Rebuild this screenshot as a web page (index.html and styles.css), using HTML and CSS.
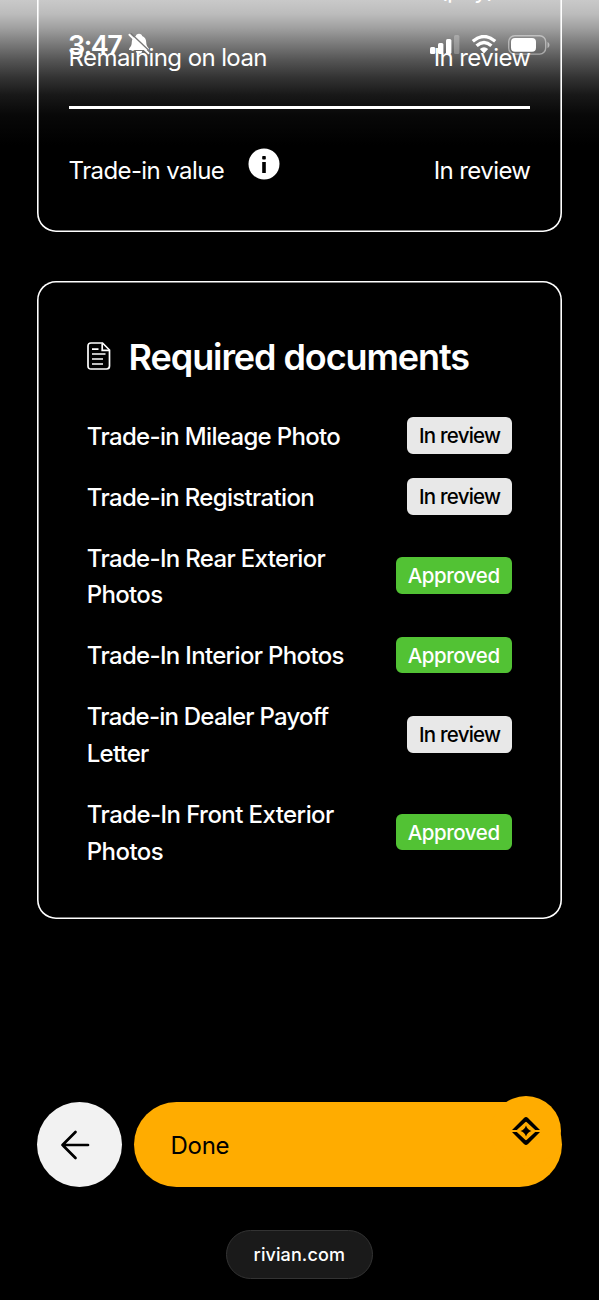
FILE: index.html
```
<!DOCTYPE html>
<html lang="en">
<head>
<meta charset="utf-8">
<meta name="viewport" content="width=device-width, initial-scale=1">
<title>Trade-in documents</title>
<link rel="stylesheet" href="styles.css">
</head>
<body>
<div class="screen">
  <div class="status-shade"></div>
  <header class="status-bar">
    <div class="status-left">
      <span class="clock">3:47</span>
      <svg class="bell" viewBox="0 0 22 22" width="22" height="22">
        <path d="M11 .8c1.900 0 2.900 1 3.100 2.200 2.600 1 4 3 4.100 5.900.1 3 .7 4.300 2.300 6 .5.500.6 1.200.5 2.100H1c-.1-.9 0-1.600.5-2.100 1.600-1.700 2.200-3 2.300-6 .1-2.900 1.500-4.900 4.100-5.900C8.100 1.800 9.100.8 11 .8z" fill="#fff"/>
        <path d="M7.800 18h6.400c-.3 1.700-1.500 2.700-3.200 2.700S8.100 19.700 7.800 18z" fill="#fff"/>
        <path d="M2.800.3 22.200 18.700" stroke="#787878" stroke-width="1.300"/>
        <path d="M1.400 1.700 20.600 20.200" stroke="#fff" stroke-width="1.900" stroke-linecap="round"/>
      </svg>
    </div>
    <div class="status-right">
      <svg class="signal" viewBox="0 0 30 20" width="30" height="20">
        <rect x="0" y="12" width="5.400" height="7" rx="1.500" fill="#fff"/>
        <rect x="8" y="8" width="5.400" height="11" rx="1.500" fill="#fff"/>
        <rect x="16" y="4" width="5.400" height="15" rx="1.500" fill="#fff"/>
        <rect x="24" y="0" width="5.400" height="19" rx="1.500" fill="#fff" opacity=".25"/>
      </svg>
      <svg class="wifi" viewBox="0 0 26 19" width="26" height="19">
        <path d="M1.800 6.300Q13-3.200 24.200 6.300M5.600 10.700Q13 4.300 20.400 10.700" fill="none" stroke="#fff" stroke-width="3.400"/>
        <path d="M8.800 14.100Q13 10.600 17.200 14.100L13 18.500z" fill="#fff"/>
      </svg>
      <svg class="battery" viewBox="0 0 42 20" width="42" height="20">
        <rect x=".7" y=".7" width="37" height="18.400" rx="6" fill="none" stroke="#fff" stroke-width="1.400" opacity=".45"/>
        <rect x="3" y="3" width="25" height="13.800" rx="4" fill="#fff"/>
        <path d="M39.500 7v6c2.600-1 2.600-5 0-6z" fill="#fff" opacity=".5"/>
      </svg>
    </div>
  </header>

  <main class="content">
    <section class="card summary">
      <div class="summary-row clipped"><span></span><span class="pay">(pay)</span></div>
      <div class="summary-row loan"><span class="s-label">Remaining on loan</span><span class="s-value">In review</span></div>
      <div class="rule"></div>
      <div class="summary-row trade">
        <span class="s-label with-info"><span class="s-trade">Trade-in value</span>
          <svg class="info" viewBox="0 0 32 32" width="32" height="32">
            <circle cx="16" cy="16" r="15.500" fill="#fff"/>
            <rect x="14.200" y="8" width="3.600" height="3.600" rx=".8" fill="#000"/>
            <rect x="14.200" y="14" width="3.600" height="11" fill="#000"/>
          </svg>
        </span>
        <span class="s-value">In review</span>
      </div>
    </section>

    <section class="card documents">
      <h2 class="heading">
        <svg class="doc-icon" viewBox="0 0 24 28" width="24" height="28">
          <path d="M4 1H15.500L22.500 8V24Q22.500 27 19.500 27H4Q1 27 1 24V4Q1 1 4 1z" fill="none" stroke="#fff" stroke-width="1.700"/>
          <path d="M15.200 1.500V8.300H22.300" fill="none" stroke="#fff" stroke-width="1.700"/>
          <path d="M5 7.200H11.500M5 12H18.500M5 17H16M5 22H16" stroke="#fff" stroke-width="1.700"/>
        </svg>
        <span class="title">Required documents</span>
      </h2>
      <ul class="list">
        <li class="item"><span class="name">Trade-in Mileage Photo</span><span class="badge review">In review</span></li>
        <li class="item"><span class="name">Trade-in Registration</span><span class="badge review">In review</span></li>
        <li class="item"><span class="name">Trade-In Rear Exterior<br>Photos</span><span class="badge approved">Approved</span></li>
        <li class="item"><span class="name">Trade-In Interior Photos</span><span class="badge approved">Approved</span></li>
        <li class="item"><span class="name payoff">Trade-in Dealer Payoff<br>Letter</span><span class="badge review">In review</span></li>
        <li class="item"><span class="name front">Trade-In Front Exterior<br>Photos</span><span class="badge approved">Approved</span></li>
      </ul>
    </section>

    <nav class="actions">
      <button class="back" aria-label="Back">
        <svg viewBox="0 0 30 30" width="30" height="30"><path d="M28 15H2.500M15.500 2 2.500 15l13 13" fill="none" stroke="#000" stroke-width="2.700" stroke-linecap="round" stroke-linejoin="round"/></svg>
      </button>
      <button class="done"><span>Done</span>
        <span class="chat">
          <svg viewBox="0 0 28 28" width="28" height="28">
            <path d="M0 13 12 1Q14-1 16 1L28 13H23.200L14.800 5.200Q14 4.500 13.200 5.200L4.800 13z"/>
            <path d="M0 15H4.800L13.200 22.800Q14 23.500 14.800 22.800L23.200 15H28L16 27Q14 29 12 27z"/>
            <path d="M14 8.500Q15.400 12.600 19.500 14Q15.400 15.400 14 19.500Q12.600 15.400 8.500 14Q12.600 12.600 14 8.500z"/>
          </svg>
        </span>
      </button>
    </nav>
    <div class="address">rivian.com</div>
  </main>
</div>
</body>
</html>
```
FILE: styles.css
```
* { box-sizing: border-box; }
body { margin: 0; background: #000; color: #fff; font-family: Inter, "Liberation Sans", sans-serif; }
.screen { position: relative; width: 599px; height: 1300px; overflow: hidden; background: #000; }
.status-shade { position: absolute; inset: 0 0 auto; height: 150px; background: linear-gradient(#c9c9c9 0, #bcbcbc 14px, #a0a0a0 28px, #7c7c7c 43px, #555 60px, #343434 77px, #181818 95px, #080808 115px, #000 145px); }
.status-bar { position: absolute; z-index: 2; top: 33px; left: 68px; right: 49px; display: flex; justify-content: space-between; color: #fff; }
.status-left { display: flex; gap: 7px; }
.clock { padding-top: 1px; font-size: 27px; line-height: 24px; font-weight: 600; letter-spacing: -1.500px; }
.status-right { display: flex; align-items: flex-start; gap: 11px; padding-top: 2px; }
.content { position: relative; display: flex; flex-direction: column; padding: 0 37px 0 36.600px; }
.card { box-shadow: inset 0 0 0 1.600px #fff; border-radius: 19px; }
.summary { height: 252.400px; margin-top: -20px; padding: 10px 32px 0; border-radius: 0 0 19px 19px; }
.summary-row { display: flex; justify-content: space-between; font-size: 24px; line-height: 36px; letter-spacing: -.6px; }
.clipped { height: 50px; line-height: 0; }
.pay { margin-right: 35px; }
.rule { height: 3px; background: #fff; margin-top: 30px; }
.trade { margin-top: 44px; }
.s-value { margin-right: -.4px; }
.with-info { display: flex; gap: 23.500px; }
.info { margin-top: -5px; }
.documents { height: 637.200px; margin-top: 49px; padding: 52.600px 50.400px 0 50px; }
.heading { display: flex; align-items: center; gap: 18px; height: 46px; margin: 0; }
.doc-icon { margin-top: -2px; }
.title { font-size: 36px; font-weight: 600; letter-spacing: -1.080px; white-space: nowrap; }
.list { display: flex; flex-direction: column; gap: 24.450px; margin: 37px 0 0; padding: 0; list-style: none; }
.item { display: flex; align-items: center; justify-content: space-between; }
.name { margin: 1.600px 0 -1.600px .2px; font-size: 24px; line-height: 36.600px; font-weight: 500; letter-spacing: -.67px; white-space: nowrap; }
.payoff { letter-spacing: -.78px; }
.front { letter-spacing: -.57px; }
.badge { height: 36.600px; padding: 0 12px; border-radius: 6px; font-size: 20.500px; line-height: 37px; font-weight: 500; }
.review { padding-right: 11.500px; background: #e8e8e8; color: #000; letter-spacing: -.8px; }
.approved { background: #52c234; color: #fff; letter-spacing: -.45px; }
.actions { display: flex; gap: 12px; margin-top: 183.300px; }
button { border: 0; font: inherit; color: #000; }
.back { display: grid; place-items: center; width: 85.500px; height: 85.500px; border-radius: 50%; background: #f2f2f2; padding: 0 9px 0 0; }
.done { position: relative; flex: 1; height: 85.500px; padding: 1px 36.500px 0; border-radius: 43px; background: #ffac00; text-align: left; font-size: 24px; letter-spacing: -.3px; }
.chat { position: absolute; top: -6px; right: 1.200px; display: grid; place-items: center; width: 70px; height: 70px; border-radius: 50%; background: #ffac00; }
.address { align-self: center; width: 147px; height: 49px; margin-top: 42.500px; border: 1.500px solid #333; border-radius: 25px; background: #1a1a1a; font-size: 18px; line-height: 47px; font-weight: 500; letter-spacing: .1px; text-align: center; }
```
